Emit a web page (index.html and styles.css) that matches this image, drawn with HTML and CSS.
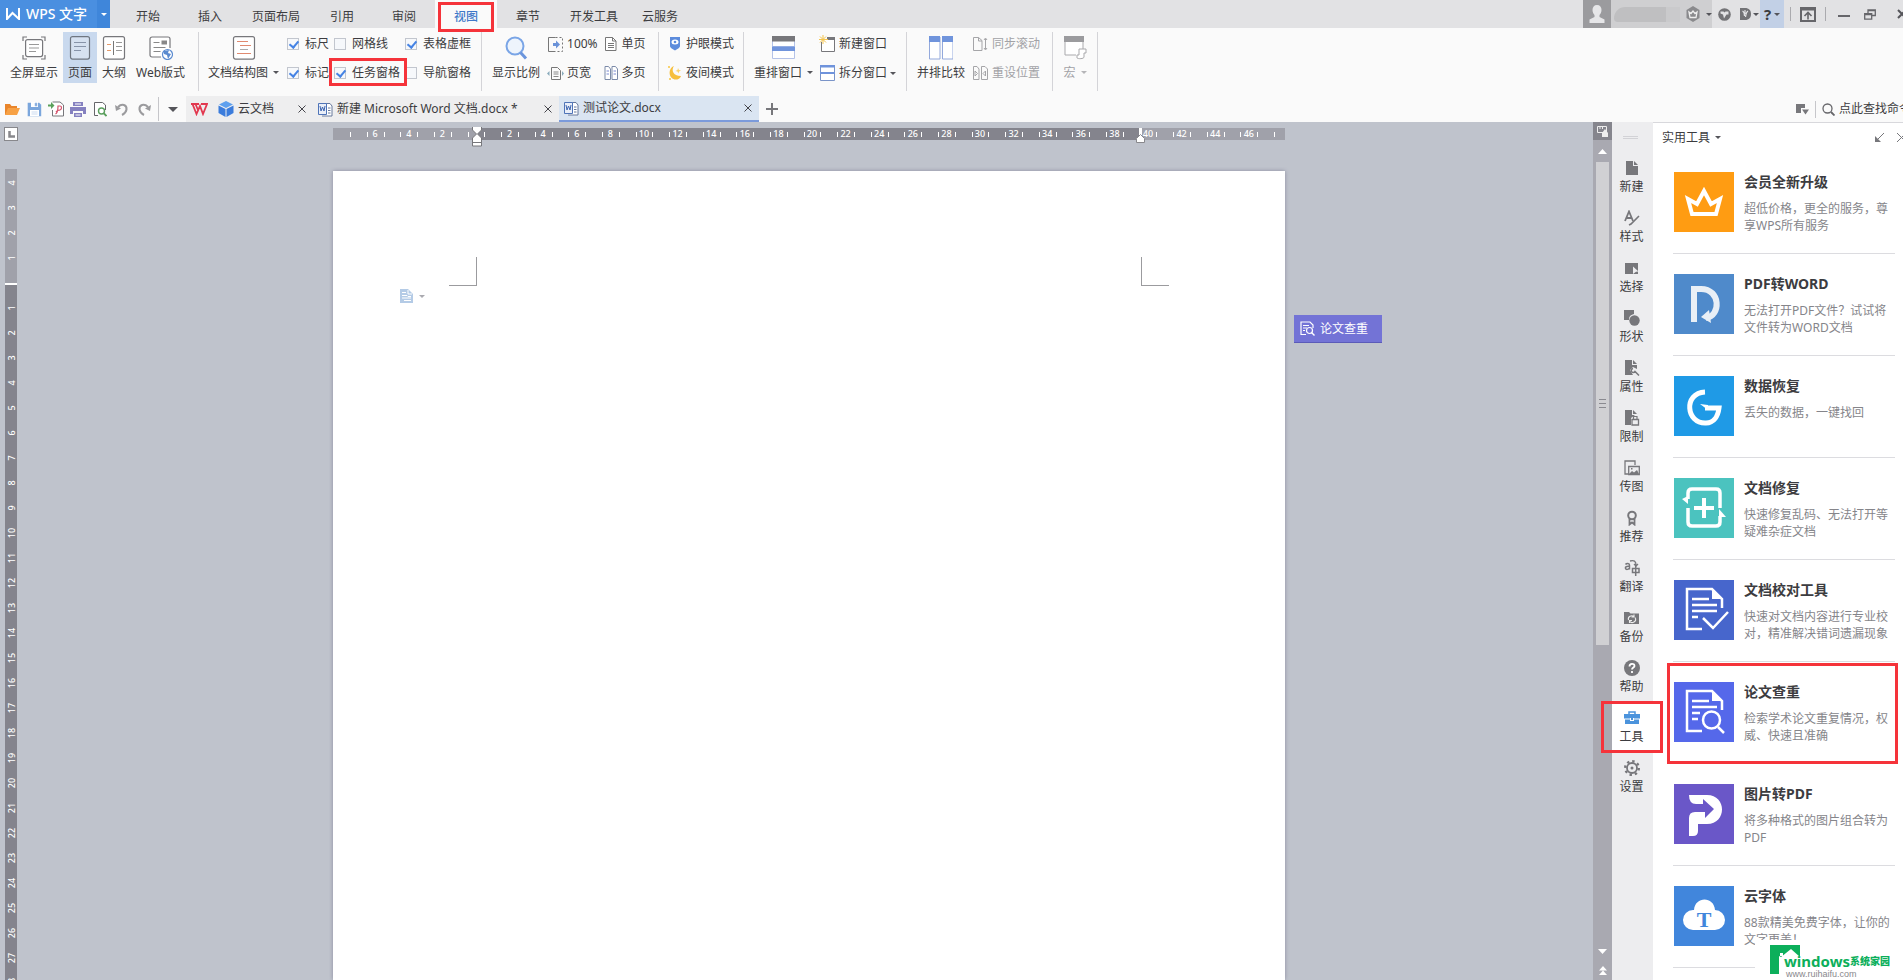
FILE: index.html
```html
<!DOCTYPE html>
<html lang="zh-CN">
<head>
<meta charset="utf-8">
<title>WPS 文字</title>
<link rel="stylesheet" href="styles.css">
</head>
<body>
<div class="app">
  <header class="titlebar">
    <button class="brand"><svg width="14" height="12" viewBox="0 0 14 12"><path d="M1 0v11l5.500-6L13 11V0" fill="none" stroke="#fff" stroke-width="2"/></svg>WPS 文字</button>
    <button class="brand-menu" aria-label="菜单"><i class="caret light"></i></button>
    <nav class="menu">
      <button>开始</button><button>插入</button><button>页面布局</button><button>引用</button><button>审阅</button><button class="active">视图</button><button>章节</button><button>开发工具</button><button>云服务</button>
    </nav>
    <div class="window-tools">
      <button class="avatar" aria-label="用户"><svg width="16" height="18" viewBox="0 0 16 18"><path d="M8 0c3 0 4.500 2 4.500 5 0 2-1 4-2 5v2l5 2.500V18H.5v-3.500l5-2.500v-2c-1-1-2-3-2-5C3.500 2 5 0 8 0z" fill="#e6e6e8"/></svg></button>
      <button class="account" aria-label="账户"><span class="masked"></span><svg width="16" height="16" viewBox="0 0 16 16"><path d="M8 0l6.500 4v8L8 16l-6.500-4V4z" fill="#8a8a8d"/><path d="M4 6l2 1.500L8 5l2 2.500L12 6l-1 5.500H5z" fill="none" stroke="#eee" stroke-width="1.300"/></svg><i class="caret"></i></button>
      <button class="tool skin" aria-label="皮肤"><svg width="13" height="13" viewBox="0 0 13 13"><circle cx="6.500" cy="6.500" r="6.300" fill="#737376"/><path d="M2.500 3.500h3l1 1 1-1h3v3H8.500L6 10.500l-1-4-2.500-1z" fill="#e2e2e4"/></svg></button>
      <button class="tool docer" aria-label="稻壳"><svg width="11" height="12" viewBox="0 0 11 12"><path d="M0 0h5c4 0 6 2.500 6 6s-2 6-6 6H0z" fill="#737376"/><path d="M2.500 3c2 1 2 3 2 5M8 3C6 4 6 6 5.500 9M5 2v4" stroke="#e2e2e4" stroke-width="1.200" fill="none"/></svg><i class="caret"></i></button>
      <button class="tool help" aria-label="帮助"><b>?</b><i class="caret"></i></button>
      <span class="bar"></span>
      <button class="tool" aria-label="折叠功能区"><svg width="16" height="15" viewBox="0 0 16 15"><path d="M1 1h14v13H1zM1 2.500h14" fill="none" stroke="#66666a" stroke-width="2"/><path d="M8 12.500V6M4.500 9L8 5.500 11.500 9" fill="none" stroke="#66666a" stroke-width="1.600"/></svg></button>
      <span class="bar"></span>
      <button class="tool win" aria-label="最小化"><svg width="12" height="10" viewBox="0 0 12 10"><path d="M0 7h12" stroke="#66666a" stroke-width="2"/></svg></button>
      <button class="tool win" aria-label="还原"><svg width="12" height="11" viewBox="0 0 12 11"><path d="M.7 4.700h7v5.500h-7zM.7 5.500h7M4 4V1h7.300v5.500H8M4 1.500h7" fill="none" stroke="#66666a" stroke-width="1.300"/></svg></button>
      <button class="tool close" aria-label="关闭"><svg width="10" height="10" viewBox="0 0 10 10"><path d="M1 1l8 8M9 1L1 9" stroke="#55555a" stroke-width="2"/></svg></button>
    </div>
  </header>

  <section class="ribbon">
    <div class="group views">
      <button class="big"><svg width="24" height="24" viewBox="0 0 24 24"><path d="M1 5V1h4M19 1h4v4M1 19v4h4M19 23h4v-4" fill="none" stroke="#77777b" stroke-width="1.200"/><rect x="3.600" y="3.600" width="17" height="17" rx="2" fill="#fff" stroke="#77777b" stroke-width="1.200"/><path d="M7 8.500h10M7 12h10M7 15.500h7" stroke="#999" /></svg><span>全屏显示</span></button>
      <button class="big selected"><svg width="24" height="24" viewBox="0 0 24 24"><rect x="2.500" y=".6" width="19" height="22.500" rx="2" fill="#d6e1f0" stroke="#6f7680" stroke-width="1.200"/><path d="M6 6.500h12M6 10.500h12M6 14.500h7" stroke="#8793a8"/></svg><span>页面</span></button>
      <button class="big"><svg width="24" height="24" viewBox="0 0 24 24"><rect x="1.500" y=".6" width="21" height="22.500" rx="2" fill="#fff" stroke="#77777b" stroke-width="1.200"/><path d="M11.500 5v14" stroke="#777"/><path d="M5 8.500h4M5 14.500h4" stroke="#e59a6a"/><path d="M14 6.500h6M14 10.500h6M14 14.500h6" stroke="#999"/></svg><span>大纲</span></button>
      <button class="big web"><svg width="24" height="24" viewBox="0 0 24 24"><path d="M12 21H3a2 2 0 0 1-2-2V3a2 2 0 0 1 2-2h16a2 2 0 0 1 2 2v9" fill="#fff" stroke="#77777b" stroke-width="1.200"/><path d="M4.500 6.500h6M4.500 11.500h12M4.500 15.500h7" stroke="#888"/><path d="M12.500 4.500H18v4h-5.500z" fill="#888"/><circle cx="18.500" cy="18.500" r="5" fill="#fff" stroke="#5b8bd0" stroke-width="1.200"/><path d="M15 15l5-1-1 3 3 1-3 5-1-4-3-1z" fill="#5b8bd0"/></svg><span>Web版式</span></button>
    </div>
    <div class="group structure">
      <button class="big"><svg width="24" height="24" viewBox="0 0 24 24"><rect x="1.500" y=".6" width="21" height="22.500" rx="2" fill="#fff" stroke="#77777b" stroke-width="1.200"/><path d="M5 5.500h11M8 9.500h11M5 17.500h14" stroke="#e08a70"/><path d="M8 13.500h8" stroke="#aaa"/></svg><span>文档结构图<i class="caret"></i></span></button>
      <div class="checks">
        <label><input type="checkbox" checked>标尺</label><label><input type="checkbox">网格线</label><label><input type="checkbox" checked>表格虚框</label>
        <label><input type="checkbox" checked>标记</label><label class="marked"><input type="checkbox" checked>任务窗格</label><label><input type="checkbox">导航窗格</label>
      </div>
    </div>
    <div class="group zoom">
      <button class="big"><svg width="24" height="24" viewBox="0 0 24 24"><circle cx="11" cy="10" r="8.500" fill="#eef4fc" stroke="#7aa5e6" stroke-width="2"/><path d="M16.500 16.500L22 22.500" stroke="#6b95dc" stroke-width="3"/></svg><span>显示比例</span></button>
      <div class="pair">
        <button><svg width="17" height="17" viewBox="0 0 17 17"><path d="M8.500 1.500H1.500v14h7" fill="none" stroke="#777"/><path d="M8.500 1.500h7v14h-7" fill="none" stroke="#777" stroke-dasharray="2 2"/><path d="M6 7h3V4.500L13 8.500 9 12.500V10H6z" fill="#6a92d8"/></svg>100%</button>
        <button><svg width="17" height="17" viewBox="0 0 17 17"><path d="M4.500 2.500h6l3 3v9h-9z" fill="none" stroke="#777"/><path d="M6.500 7h5M6.500 9h5M6.500 11.500h5" stroke="#888"/><path d="M2.500 6L0 8.500 2.500 11zM15 6v5l2-2.500z" fill="#8ab"/></svg>页宽</button>
      </div>
      <div class="pair pages">
        <button><svg width="14" height="16" viewBox="0 0 14 16"><path d="M1.500 1.500h7l3.500 3.500v9.500H1.500z" fill="#fff" stroke="#777"/><path d="M8.500 1.500V5H12M4 7.500h6M4 9.500h6M4 11.500h6" stroke="#777" fill="none"/></svg>单页</button>
        <button><svg width="14" height="16" viewBox="0 0 14 16"><path d="M1 1.500h3.500L6.500 4v10.500H1zM8 1.500h3.500l2 2.500v10.500H8z" fill="#fff" stroke="#7b8aa8"/><path d="M2.500 6h2.500M2.500 9h2.500M9.500 6h2.500M9.500 9h2.500" stroke="#7b8ad0"/></svg>多页</button>
      </div>
    </div>
    <div class="group eye">
      <div class="pair">
        <button><svg width="14" height="16" viewBox="0 0 14 16"><path d="M2 1h10v9c0 2-3 3-5 4.500C5 13 2 12 2 10z" fill="#5c8cdc"/><ellipse cx="7" cy="6" rx="3.500" ry="2.500" fill="#fff"/><circle cx="7" cy="6" r="1.300" fill="#5c8cdc"/></svg>护眼模式</button>
        <button><svg width="14" height="16" viewBox="0 0 14 16"><path d="M6 1C3 5 5 11 13 11c-1 3-4 4-6.500 3.500C0 13 0 3 6 1z" fill="#f6bf3c"/><path d="M10 3l1 2 2 .5-2 1-.5 2-1-2-2-.5 2-1zM0 1h2v2H0zM1 13h2v2H1z" fill="#f9d36e"/></svg>夜间模式</button>
      </div>
    </div>
    <div class="group windows">
      <button class="big"><svg width="24" height="24" viewBox="0 0 24 24"><path d="M.5 1h22v9.500H.5zM.5 12.500h22v10H.5z" fill="#fff" stroke="#b5c3e8"/><path d="M0 0h23v5.500H0z" fill="#77777b"/><path d="M0 10.500h23V15H0z" fill="#7094dc"/></svg><span>重排窗口<i class="caret"></i></span></button>
      <div class="pair">
        <button><svg width="17" height="18" viewBox="0 0 17 18"><path d="M2.500 7v9.500h13V3.500H8" fill="#fff" stroke="#77777b"/><path d="M8 2h8v3H8z" fill="#77777b"/><path d="M4 0v9M0 4.500h9M1 1.500l6 6M7 1.500l-6 6" stroke="#f4c54e"/></svg>新建窗口</button>
        <button><svg width="17" height="18" viewBox="0 0 17 18"><path d="M1.500 1.500h14v7h-14zM1.500 8.500h14v8h-14z" fill="#fff" stroke="#7a94c8"/><path d="M1 1h15v2.500H1zM1 8h15v2H1z" fill="#6f93dc"/></svg>拆分窗口<i class="caret"></i></button>
      </div>
    </div>
    <div class="group compare">
      <button class="big"><svg width="24" height="24" viewBox="0 0 24 24"><path d="M.5 1h10.500v22H.5zM13.500 1H24v22H13.500z" fill="#fff" stroke="#93a9dc"/><path d="M0 0h11v6H0zM13 0h11v6H13z" fill="#7094dc"/></svg><span>并排比较</span></button>
      <div class="pair off">
        <button disabled><svg width="17" height="16" viewBox="0 0 17 16"><path d="M1.500 1.500h5l3.500 3v10H1.500zM6.500 1.500V5H10M13.500 3v10M12 4l1.500-2L15 4M12 12l1.500 2 1.500-2" fill="none" stroke="#a5a5a8"/></svg>同步滚动</button>
        <button disabled><svg width="17" height="16" viewBox="0 0 17 16"><path d="M1.500 1.500h3.500L7 4v10.500H1.500zM9.500 1.500H13L15.500 4v10.500h-6zM3 6v5l2.500-2.500zM13.500 6v5L11 8.500z" fill="none" stroke="#a5a5a8"/></svg>重设位置</button>
      </div>
    </div>
    <div class="group macro">
      <button class="big" disabled><svg width="24" height="24" viewBox="0 0 24 24"><path d="M13 19H2V3h18v10" fill="#fff" stroke="#a9a9ac"/><path d="M1 0h20v6H1z" fill="#9b9b9e"/><path d="M16 13h7v4h-2v4c0 2-6 2-7 1v-3h2z" fill="#fff" stroke="#a9a9ac"/></svg><span>宏<i class="caret"></i></span></button>
    </div>
  </section>

  <section class="docbar">
    <div class="quick">
      <button aria-label="打开"><svg width="16" height="14" viewBox="0 0 16 14"><path d="M1 13V2h5l1.500 2H13v2" fill="#e9852b"/><path d="M1 13L4 6h12l-3 7z" fill="#f7a145"/></svg></button>
      <button aria-label="保存"><svg width="15" height="15" viewBox="0 0 15 15"><path d="M.7.7h11.500l2 2v11.500H.7z" fill="#7ba6dc"/><path d="M4 0h7v5H4zM3 8h9v6H3z" fill="#fff"/><path d="M8 1h2v3H8zM4.500 10h6M4.500 12h6" fill="#7ba6dc" stroke="#a9c4e6" stroke-width=".6"/></svg></button>
      <button aria-label="输出为PDF"><svg width="16" height="16" viewBox="0 0 16 16"><path d="M4.500 9v6h11V4L12 1H4.500" fill="#fff" stroke="#77777b"/><path d="M0 3.500h3V1l3.500 3.500L3 8V5.500H0z" fill="#5aa05a"/><path d="M7.500 13c2-1 2.500-5 2.500-8h2c2 0 2 3.500 0 4-2 .5-3 0-4 2" fill="none" stroke="#d4506a" stroke-width="1.200"/></svg></button>
      <button aria-label="打印"><svg width="16" height="15" viewBox="0 0 16 15"><path d="M3 0h10v4H3zM0 5h16v7h-3V9H3v3H0zM4 11h8v4H4z" fill="#8581c0"/><path d="M5 2h6M5.500 13h5" stroke="#fff"/></svg></button>
      <button aria-label="打印预览"><svg width="14" height="16" viewBox="0 0 14 16"><path d="M5 14.500H1.500v-13h8L12.500 4v5" fill="#fff" stroke="#66666a"/><circle cx="8.500" cy="10" r="3" fill="#fff" stroke="#5b9f5e" stroke-width="1.400"/><path d="M10.500 12l3 3" stroke="#5b9f5e" stroke-width="1.800"/></svg></button>
      <button aria-label="撤销"><svg width="14" height="14" viewBox="0 0 14 14"><path d="M3 5c4-4 9-2 8.500 2.500C11 10 9 12 7 13" fill="none" stroke="#9b9b9e" stroke-width="2"/><path d="M0 3l1 6 5-2.500z" fill="#9b9b9e"/></svg></button>
      <button aria-label="恢复"><svg width="14" height="14" viewBox="0 0 14 14"><path d="M11 5C7 1 2 3 2.500 7.500 3 10 5 12 7 13" fill="none" stroke="#9b9b9e" stroke-width="2"/><path d="M14 3l-1 6-5-2.500z" fill="#9b9b9e"/></svg></button>
      <span class="bar"></span>
      <button aria-label="更多"><i class="caret wide"></i></button>
    </div>
    <div class="tabs">
      <button class="home" aria-label="首页"><svg width="17" height="13" viewBox="0 0 17 13"><path d="M0 1h8M1.500 1l4 10L9 3l3 8 4-10h-6M4.500 1L7 7" fill="none" stroke="#e2384f" stroke-width="1.800"/></svg></button>
      <div class="tab cloud"><svg width="16" height="16" viewBox="0 0 16 16"><path d="M8 0l7 3.500L8 7 1 3.500z" fill="#5fa0ee"/><path d="M.5 4.500L7.500 8v8L.5 12zM15.500 4.500L8.500 8v8l7-4z" fill="#3b7cdc"/></svg><span>云文档</span><button class="x" aria-label="关闭"><svg width="8" height="8"><path d="M.5.5l7 7M7.500.5l-7 7" stroke="#44444a"/></svg></button></div>
      <div class="tab file"><svg width="15" height="15" viewBox="0 0 15 15"><path d="M5 1.500h7L14 4v10H4" fill="#fff" stroke="#66789c"/><path d="M10 6h2.500M10 8.500h2.500M10 11h2.500" stroke="#66789c"/><path d="M.5 1.500h8v11h-8z" fill="#e9eef8" stroke="#4f74b8"/><path d="M2 4l1 5 1.500-4L6 9l1-5" fill="none" stroke="#3f66b0"/></svg><span>新建 Microsoft Word 文档.docx *</span><button class="x" aria-label="关闭"><svg width="8" height="8"><path d="M.5.5l7 7M7.500.5l-7 7" stroke="#44444a"/></svg></button></div>
      <div class="tab file active"><svg width="15" height="15" viewBox="0 0 15 15"><path d="M5 1.500h7L14 4v10H4" fill="#fff" stroke="#66789c"/><path d="M10 6h2.500M10 8.500h2.500M10 11h2.500" stroke="#66789c"/><path d="M.5 1.500h8v11h-8z" fill="#e9eef8" stroke="#4f74b8"/><path d="M2 4l1 5 1.500-4L6 9l1-5" fill="none" stroke="#3f66b0"/></svg><span>测试论文.docx</span><button class="x" aria-label="关闭"><svg width="8" height="8"><path d="M.5.5l7 7M7.500.5l-7 7" stroke="#44444a"/></svg></button></div>
    </div>
    <button class="add" aria-label="新建标签"><svg width="12" height="12" viewBox="0 0 12 12"><path d="M6 0v12M0 6h12" stroke="#77777b" stroke-width="2"/></svg></button>
    <div class="finder">
      <button aria-label="窗口列表"><svg width="13" height="11" viewBox="0 0 13 11"><path d="M0 0h9v4H5v5H0z" fill="#77777b"/><path d="M6 5.500h7L9.500 10.500z" fill="#77777b"/></svg></button>
      <span class="bar"></span>
      <label for="find"><svg width="13" height="13" viewBox="0 0 13 13"><circle cx="5.500" cy="5.500" r="4.500" fill="none" stroke="#66666a" stroke-width="1.300"/><path d="M9 9l3.500 3.500" stroke="#66666a" stroke-width="1.800"/></svg></label>
      <input id="find" type="text" aria-label="查找命令" value="点此查找命令">
    </div>
  </section>

  <main class="workspace">
    <section class="editor">
      <div class="ruler-row">
        <button class="tabstop" aria-label="制表符"><svg width="7" height="7" viewBox="0 0 7 7"><path d="M1.500 0v5.500H7" fill="none" stroke="#88888c" stroke-width="2.500"/></svg></button>
        <div class="ruler-area"><svg class="h-ruler" id="hruler" width="952" height="28"></svg></div>
      </div>
      <div class="canvas-row">
        <svg class="v-ruler" id="vruler" width="12" height="100%"></svg>
        <div class="canvas">
          <article class="page">
            <div class="margins"><span class="mark left"></span><span class="mark right"></span></div>
            <button class="header-tool" aria-label="页眉选项"><svg width="13" height="14" viewBox="0 0 13 14"><path d="M0 0h8l5 5v9H0z" fill="#b4cbe6"/><path d="M2 3.500h4M2 6.500h5l1 1h3M2 9h9M4 11.500h7M8 1v4h4" fill="none" stroke="#fff"/></svg><i class="caret"></i></button>
            <button class="float"><svg width="15" height="15" viewBox="0 0 15 15"><path d="M6 13.500H1V1h9l3 3v3M3 4.500h6M3 7h4M3 9.500h2" fill="none" stroke="#fff" stroke-width="1.200"/><circle cx="9.500" cy="9.500" r="3" fill="none" stroke="#fff" stroke-width="1.200"/><path d="M11.500 11.500l3 3" stroke="#fff" stroke-width="1.400"/></svg>论文查重</button>
          </article>
        </div>
      </div>
    </section>

    <aside class="scrollbar">
      <button class="ruler-toggle" aria-label="标尺开关"><svg width="11" height="11" viewBox="0 0 11 11"><path d="M.5.5h9v6h-9z" fill="none" stroke="#eee"/><path d="M3 0v3M5.500 0v3" stroke="#eee"/><path d="M8 3l3 4v4H5V7z" fill="#eee"/></svg></button>
      <button class="up" aria-label="向上"><svg width="9" height="5"><path d="M0 5l4.500-5L9 5z" fill="#fff"/></svg></button>
      <div class="track"><div class="thumb"><svg width="7" height="9"><path d="M0 .5h7M0 4.500h7M0 8.500h7" stroke="#8a8a90"/></svg></div></div>
      <button class="down" aria-label="向下"><svg width="9" height="5"><path d="M0 0h9L4.500 5z" fill="#fff"/></svg></button>
      <button class="prev" aria-label="上一页"><svg width="8" height="9"><path d="M0 4.500L4 0l4 4.500zM0 9l4-4.500L8 9z" fill="#fff"/></svg></button>
    </aside>

    <nav class="strip">
      <span class="grip"></span>
      <button><svg width="16" height="16" viewBox="0 0 16 16"><path d="M2 1h7v5h5v9H2zM10 1l4 4h-4z" fill="#77777b"/></svg>新建</button>
      <button><svg width="16" height="16" viewBox="0 0 16 16"><path d="M1 11L5 1.500 9 11M2.500 8h5" fill="none" stroke="#77777b" stroke-width="1.800"/><path d="M15 6l-8 8-2 1" stroke="#77777b" stroke-width="1.600" fill="none"/></svg>样式</button>
      <button><svg width="16" height="16" viewBox="0 0 16 16"><path d="M1 3h13v11H1z" fill="#77777b"/><path d="M9 6.500l5.500 5-2.500.3L9 14z" fill="#ededef"/></svg>选择</button>
      <button><svg width="16" height="16" viewBox="0 0 16 16"><path d="M0 0h10v4C6 5 5 7 5 10H0z" fill="#77777b"/><circle cx="10.500" cy="10.500" r="5.200" fill="#77777b"/></svg>形状</button>
      <button><svg width="16" height="16" viewBox="0 0 16 16"><path d="M1 0h7v5h5v4L9 7 6 10l3 5H1zM9 0l4 4H9z" fill="#77777b"/><path d="M9 8.500a2 2 0 1 0 2 3l4 4" fill="none" stroke="#77777b" stroke-width="1.500"/></svg>属性</button>
      <button><svg width="16" height="16" viewBox="0 0 16 16"><path d="M1 0h7v5h3L7 8v7H1zM9 0l4 4H9z" fill="#77777b"/><path d="M8 9.500h6.500V15H8z" fill="none" stroke="#77777b" stroke-width="1.300"/><path d="M9.500 9V6.500h3.500V9" fill="none" stroke="#77777b" stroke-width="1.200"/></svg>限制</button>
      <button><svg width="16" height="16" viewBox="0 0 16 16"><path d="M4 14H1V1h10v4M4.700 6.500h10.600v8H4.700z" fill="none" stroke="#77777b" stroke-width="1.300"/><path d="M5 14l3-3 2 1.500 3-2.500 2 4zM7 8h1.500v1.500H7z" fill="#77777b"/></svg>传图</button>
      <button><svg width="16" height="16" viewBox="0 0 16 16"><circle cx="8" cy="5.500" r="3.800" fill="none" stroke="#77777b" stroke-width="2"/><path d="M5.500 9v5.500L8 12.500l2.500 2V9" fill="none" stroke="#77777b" stroke-width="1.800"/></svg>推荐</button>
      <button><svg width="16" height="16" viewBox="0 0 16 16"><path d="M1.500 4.500c1-1.500 4-1.500 4 .5v4.500M5.500 6.500c-3-.5-4.500.5-4 2 .5 1.500 3.500 1 4-.5M8.500 8.500h6.500v4H8.500zM11.700 6v10" fill="none" stroke="#77777b" stroke-width="1.500"/><path d="M6 1c4-1 6 0 6 4M10 4l2 2 2-2" fill="none" stroke="#77777b" stroke-width="1.300"/></svg>翻译</button>
      <button><svg width="16" height="16" viewBox="0 0 16 16"><path d="M0 2h5l1.500 1.500H15V14H0z" fill="#77777b"/><path d="M4.500 10a3.200 3.200 0 0 1 5.500-3M11 7.500a3.200 3.200 0 0 1-5.500 3.500M10 4.500V7H7.500M5.500 13v-2.500H8" fill="none" stroke="#eee" stroke-width="1.100"/></svg>备份</button>
      <button><svg width="16" height="16" viewBox="0 0 16 16"><circle cx="8" cy="8" r="8" fill="#77777b"/><path d="M5.500 6.500c0-3.500 5-3.500 5-.5 0 1.500-2.500 1.700-2.500 3.500M8 11v2" fill="none" stroke="#fff" stroke-width="1.800"/></svg>帮助</button>
      <button class="active"><svg width="16" height="16" viewBox="0 0 16 16"><path d="M5 4V2h6v2" fill="none" stroke="#4b93dc" stroke-width="1.500"/><path d="M0 4h16v4.500H0zM1 9.500h14V14H1z" fill="#4b93dc"/><path d="M6 8h4v3H6z" fill="#fff"/><path d="M7 8h2v2H7z" fill="#4b93dc"/></svg>工具</button>
      <button><svg width="16" height="16" viewBox="0 0 16 16"><circle cx="8" cy="8" r="5" fill="none" stroke="#77777b" stroke-width="1.800"/><circle cx="8" cy="8" r="1.500" fill="#77777b"/><circle cx="8" cy="8" r="6.800" fill="none" stroke="#77777b" stroke-width="2.400" stroke-dasharray="2.400 2.940"/></svg>设置</button>
    </nav>

    <aside class="panel">
      <header><button class="heading">实用工具<i class="caret"></i></button><button class="shrink" aria-label="收起"><svg width="9" height="9"><path d="M9 0L2 7" stroke="#77777b"/><path d="M0 3v6h6z" fill="#77777b"/></svg></button><button class="shut" aria-label="关闭"><svg width="9" height="9"><path d="M0 0l9 9M9 0L0 9" stroke="#77777b"/></svg></button></header>
      <ul class="cards">
        <li><svg class="orange" viewBox="0 0 60 60"><path d="M14 27l9 5 7-13 7 13 9-5-4 15H18z" fill="none" stroke="#fff" stroke-width="4"/></svg><div><h3>会员全新升级</h3><p>超低价格，更全的服务，尊享WPS所有服务</p></div></li>
        <li><svg class="steel" viewBox="0 0 60 60"><path d="M20 48V15h7c20 0 20 27 5 29" fill="none" stroke="#e9eff6" stroke-width="6"/><path d="M27 43l8-7 2 13z" fill="#e9eff6"/></svg><div><h3>PDF转WORD</h3><p>无法打开PDF文件？试试将文件转为WORD文档</p></div></li>
        <li><svg class="sky" viewBox="0 0 60 60"><path d="M31 16c-22 1-19 32 1 31 8 0 12-7 13-15H31" fill="none" stroke="#fff" stroke-width="5"/><path d="M26 28l8 1v5z" fill="#fff"/></svg><div><h3>数据恢复</h3><p>丢失的数据，一键找回</p></div></li>
        <li><svg class="teal" viewBox="0 0 60 60"><path d="M14 21v-6q0-4 4-4h24q4 0 4 4v15M46 38v6q0 4-4 4H18q-4 0-4-4V30" fill="none" stroke="#fff" stroke-width="3.500"/><path d="M8 21l6-3v8zM45 31l7 8h-7zM28 20h4v8h8v4h-8v8h-4v-8h-8v-4h8z" fill="#fff"/></svg><div><h3>文档修复</h3><p>快速修复乱码、无法打开等疑难杂症文档</p></div></li>
        <li><svg class="royal" viewBox="0 0 60 60"><path d="M28 49H13V9h25l10 10v9" fill="none" stroke="#fff" stroke-width="2.500"/><path d="M38 9v10h11z" fill="#fff"/><path d="M18 19h17M18 25h25M18 31h25M18 37h6M29 38l10 10 15-16" fill="none" stroke="#fff" stroke-width="2.500"/></svg><div><h3>文档校对工具</h3><p>快速对文档内容进行专业校对，精准解决错词遗漏现象</p></div></li>
        <li class="marked"><svg class="indigo" viewBox="0 0 60 60"><path d="M28 49H13V9h25l10 10v9" fill="none" stroke="#fff" stroke-width="2.500"/><path d="M38 9v10h11z" fill="#fff"/><path d="M18 19h17M18 25h25M18 31h8M18 37h6M44 45l6 6" fill="none" stroke="#fff" stroke-width="2.500"/><circle cx="37.500" cy="38" r="8.500" fill="none" stroke="#fff" stroke-width="2.500"/></svg><div><h3>论文查重</h3><p>检索学术论文重复情况，权威、快速且准确</p></div></li>
        <li><svg class="violet" viewBox="0 0 60 60"><path d="M15 11h18c20 0 20 29 0 29h-9v7q0 5-5 5h-4V34q0-6 6-6h10v6l9-9-11-10v5h-7q-7 0-7-9z" fill="#fff"/></svg><div><h3>图片转PDF</h3><p>将多种格式的图片组合转为PDF</p></div></li>
        <li><svg class="azure" viewBox="0 0 60 60"><path d="M19 44a10 10 0 0 1 0-20h1c1-14 20-14 21 0a10 10 0 0 1 0 20z" fill="#fff"/><text x="30" y="41" text-anchor="middle" class="glyph">T</text></svg><div><h3>云字体</h3><p>88款精美免费字体，让你的文字更美！</p></div></li>
      </ul>
      <div class="stamp">
        <svg width="31" height="29" viewBox="0 0 31 29"><path d="M0 0h30v12L21 4l-10 8-2-1v18H0z" fill="#0caf5b"/><path d="M10 8h3v3h-3z" fill="#fff"/></svg>
        <div class="stamp-text">
          <span class="stamp-name">windows<small>系统家园</small></span>
          <span class="stamp-url">www.ruihaifu.com</span>
        </div>
      </div>
    </aside>
  </main>
</div>
<script src="rulers.js"></script>
</body>
</html>
```
FILE: styles.css
```css
* { box-sizing: border-box; }
body { margin: 0; font: 12px/16px "Noto Sans", "Noto Sans CJK SC", sans-serif; color: #3c3c40; overflow: hidden; }
button { font: inherit; color: inherit; background: none; border: 0; padding: 0; display: flex; align-items: center; white-space: nowrap; }
svg { display: block; flex: none; }
.app { height: 100vh; display: flex; flex-direction: column; overflow: hidden; background: #fafafa; }
.caret { display: inline-block; flex: none; border: 3px solid transparent; border-top-color: #55555a; border-bottom: 0; }
.caret.light { border-top-color: #fff; }
.caret.wide { border-width: 5px; border-bottom: 0; }
.bar { width: 1px; background: #c6c6ca; }

.titlebar { height: 28px; flex: none; display: flex; background: #e2e2e4; }
.brand { width: 97px; padding-left: 6px; gap: 6px; background: #4a8fe0; color: #fff; font-size: 14px; font-weight: 500; }
.brand-menu { width: 13px; background: #3f86da; justify-content: center; }
.menu { display: flex; margin-left: 7px; }
.menu button { min-width: 62px; padding: 6px 11px 0; justify-content: center; }
.menu .active { position: relative; background: #fafafa; color: #3f78c8; font-weight: 500; }
.menu .active::after { content: ""; position: absolute; inset: 2px 3px -4px; border: 3px solid #f5333a; }
.window-tools { margin-left: auto; display: flex; align-items: stretch; width: 320px; flex: none; overflow: hidden; }
.window-tools > * { flex: none; }
.avatar { width: 28px; background: #9b9b9e; justify-content: center; }
.account { width: 101px; background: #cfcfd1; padding-left: 3px; gap: 5px; }
.masked { width: 66px; height: 15px; border-radius: 12px 0 0 4px; background: linear-gradient(90deg, #bfbfc1 0 52px, #cacacc 52px); }
.tool { padding: 0 3px; gap: 2px; }
.skin { padding: 0 4px 0 6px; }
.docer { padding: 0 1px 0 5px; }
.help { width: 24px; padding: 0 4px; gap: 3px; background: #c2d0e6; }
.help b { font-size: 15px; }
.window-tools .bar { height: 14px; margin: 7px 6px 0; background: #aaaaae; }
.win { width: 26px; padding: 0 6px; }
.close { padding-left: 13px; }

.ribbon { flex: none; height: 68px; display: flex; padding-top: 4px; }
.group { height: 59px; display: flex; border-right: 1px solid #d4d4d8; }
.big { flex-direction: column; height: 51px; padding: 4px 5px 0; gap: 5px; align-self: flex-start; }
.big.selected { background: #c9d9ee; }
.big .caret { margin-left: 5px; vertical-align: 3px; }
button:disabled { color: #a2a2a6; }
button:disabled .caret { border-top-color: #b5b5b8; }
.views { padding-left: 5px; width: 199px; }
.structure { width: 283px; padding-left: 4px; }
.checks { display: grid; grid-template-columns: 47px 71px 70px; grid-template-rows: 24px 34px; margin-left: 3px; }
.checks label { display: flex; align-items: center; gap: 6px; white-space: nowrap; }
.checks input { appearance: none; position: relative; width: 12px; height: 12px; margin: 0; border: 1px solid #c2c6ce; background: #f6f8fb; flex: none; }
.checks input:checked::after { content: ""; position: absolute; left: 3px; top: 0; width: 4px; height: 7px; border: solid #4583e4; border-width: 0 2px 2px 0; transform: rotate(40deg); }
.checks .marked { position: relative; z-index: 1; }
.checks .marked::after { content: ""; position: absolute; inset: 2px -2px 4px -5px; border: 3px solid #f5333a; }
.pair { display: grid; grid-template-rows: 24px 34px; justify-items: start; }
.pair button { gap: 3px; }
.zoom { width: 177px; padding-left: 5px; }
.zoom .pair { width: 60px; margin-left: 2px; }
.zoom .pages { margin-left: 2px; }
.zoom .pages button { gap: 4px; }
.eye { width: 85px; padding-left: 9px; }
.eye .pair button { gap: 4px; }
.windows { width: 163px; padding-left: 5px; }
.windows .pair { margin-left: 1px; }
.compare { width: 146px; padding-left: 5px; }
.compare .pair { margin-left: 2px; }
.macro { width: 45px; padding-left: 5px; }

.docbar { flex: none; height: 26px; display: flex; }
.quick { width: 186px; padding-left: 1px; display: flex; flex: none; }
.quick button { width: 22px; justify-content: center; }
.quick .bar { height: 24px; margin: 1px 3px; }
.tabs { display: flex; background: #eeeeef; }
.home { width: 27px; justify-content: center; }
.tab { display: flex; align-items: center; gap: 4px; padding: 0 5px; white-space: nowrap; }
.tab .x { margin-left: auto; width: 12px; height: 16px; justify-content: center; }
.cloud { width: 100px; }
.file { width: 246px; }
.file.active { width: 200px; background: #dae5f2; border-bottom: 2px solid #7b9adb; }
.add { padding: 0 7px; }
.finder { margin-left: auto; width: 107px; display: flex; align-items: center; flex: none; overflow: hidden; }
.finder .bar { height: 17px; margin: 0 6px; }
.finder input { font: inherit; color: inherit; border: 0; padding: 0; margin-left: 4px; min-width: 0; flex: 1; background: none; }

.workspace { flex: 1; min-height: 0; display: flex; }
.editor { flex: 1; min-width: 0; display: flex; flex-direction: column; background: #bfc3cc; }
.ruler-row { flex: none; height: 47px; display: flex; padding-top: 5px; }
.tabstop { width: 14px; height: 14px; margin: 0 7px 0 4px; justify-content: center; background: #fff; border: 1px solid #88888c; flex: none; }
.ruler-area { flex: 1; display: flex; justify-content: center; }
.canvas-row { flex: 1; min-height: 0; display: flex; padding-left: 5px; }
.v-ruler { overflow: hidden; }
.ruler-text { font: 500 9px "Noto Sans", sans-serif; fill: #fff; text-anchor: middle; }
.canvas { flex: 1; margin-left: 8px; padding-top: 2px; display: flex; justify-content: center; }
.page { position: relative; width: 952px; background: #fff; padding-top: 86px; box-shadow: 0 0 4px #8c8ca0; clip-path: inset(-4px -120px 0 -4px); }
.margins { display: flex; justify-content: space-between; padding: 0 116px; }
.mark { width: 28px; height: 29px; border-bottom: 1px solid #9b9b9e; }
.mark.left { border-right: 1px solid #9b9b9e; }
.mark.right { border-left: 1px solid #9b9b9e; }
.header-tool { margin: 3px 0 0 67px; gap: 6px; }
.header-tool .caret { border-top-color: #aaaab0; }
.float { position: absolute; left: calc(100% + 9px); top: 144px; width: 88px; height: 28px; padding-left: 6px; gap: 5px; color: #fff; background: #7373d6; border-bottom: 1px solid #5b5bb8; }

.scrollbar { width: 19px; flex: none; display: flex; flex-direction: column; align-items: center; background: #a9a9b1; }
.scrollbar button { justify-content: center; width: 100%; flex: none; }
.ruler-toggle { height: 18px; background: #85858d; }
.up { height: 22px; }
.track { flex: 1; width: 13px; }
.thumb { height: 62%; background: #d0d0d3; display: flex; align-items: center; justify-content: center; }
.down { height: 20px; }
.prev { height: 19px; }

.strip { width: 41px; flex: none; display: flex; flex-direction: column; background: #ededef; }
.grip { width: 15px; height: 3px; margin: 14px 0 13px 11px; border: solid #d2d2d6; border-width: 1px 0; flex: none; }
.strip button { flex: none; height: 50px; flex-direction: column; padding: 8px 2px 0 0; gap: 3px; }
.strip .active { position: relative; background: #fff; }
.strip .active::after { content: ""; position: absolute; inset: -1px -10px -1px -11px; border: 3px solid #f5333a; z-index: 1; }

.panel { position: relative; width: 250px; flex: none; background: #fff; overflow: hidden; border-top: 1px solid #d8d8dc; }
.panel header { display: flex; height: 29px; padding-left: 9px; }
.heading { gap: 5px; }
.shrink { margin-left: auto; margin-right: 13px; }
.shut { width: 6px; overflow: hidden; justify-content: flex-start; }
.cards { list-style: none; margin: 0; padding: 0 8px 0 20px; }
.cards li { position: relative; height: 102px; display: flex; gap: 10px; padding: 20px 0 0 1px; border-bottom: 1px solid #dcdce0; }
.cards svg { width: 60px; height: 60px; }
.cards h3 { margin: 0 0 8px; font-size: 14px; line-height: 20px; font-weight: 700; }
.cards p { margin: 0; width: 146px; line-height: 17px; color: #85858a; }
.cards .marked { border-color: transparent; }
.cards .marked::after { content: ""; position: absolute; inset: 1px -3px -1px -6px; border: 3px solid #f5333a; }
.orange { background: #ff9c12; }
.steel { background: #4f8acb; }
.sky { background: #1f9ae6; }
.teal { background: #4bc3bf; }
.royal { background: #4766cc; }
.indigo { background: #5568ea; }
.violet { background: #6a57c8; }
.azure { background: #4186dc; }
.glyph { font: 700 22px "Liberation Serif", serif; fill: #4186dc; }
.stamp { position: absolute; right: 0; bottom: 0; width: 148px; height: 40px; padding: 5px 0 0 15px; display: flex; background: #fff; }
.stamp-text { display: flex; flex-direction: column; margin: 8px 0 0 -17px; }
.stamp-name { display: flex; font-size: 15px; line-height: 16px; height: 16px; font-weight: 700; color: #0caf5b; white-space: nowrap; }
.stamp-name small { font-size: 10px; line-height: 16px; font-weight: 900; }
.stamp-url { margin-left: 2px; font: 9px/10px "Liberation Sans", sans-serif; color: #88888c; }
```
FILE: rulers.js
```javascript
const NS = 'http://www.w3.org/2000/svg';
function add(svg, tag, attrs, text) {
  const el = document.createElementNS(NS, tag);
  for (const key in attrs) el.setAttribute(key, attrs[key]);
  if (text !== undefined) el.textContent = text;
  svg.appendChild(el);
}

const h = document.getElementById('hruler');
const zero = 143, unit = 16.8;
add(h, 'rect', { x: 0, y: 1, width: 952, height: 12, fill: '#a0a1aa' });
add(h, 'rect', { x: zero, y: 1, width: 665, height: 12, fill: '#84848d' });
for (let n = -8; n <= 48; n += 2) {
  const x = zero + n * unit;
  for (const t of [x - unit / 2, x + unit / 2]) {
    if (t > 2 && t < 945) add(h, 'rect', { x: Math.round(t), y: 5, width: 1, height: 5, fill: '#fff' });
  }
  if (n !== 0 && n > -8 && n < 48) add(h, 'text', { x: x, y: 10, class: 'ruler-text' }, Math.abs(n));
}
add(h, 'path', { d: 'M139.500 -1h9v4l-4 4 4 4v8h-9v-8l4-4-4-4z', fill: '#fff', stroke: '#77777b' });
add(h, 'path', { d: 'M139.500 15.500h9', stroke: '#77777b' });
add(h, 'path', { d: 'M807.500 1v7', stroke: '#fff', 'stroke-width': 3 });
add(h, 'path', { d: 'M803.500 15.500v-4l4-4 4 4v4z', fill: '#fff', stroke: '#88888c' });

const v = document.getElementById('vruler');
const origin = 115;
add(v, 'rect', { x: 0, y: 0, width: 12, height: origin, fill: '#a0a1aa' });
add(v, 'rect', { x: 0, y: origin, width: 12, height: '100%', fill: '#84848d' });
add(v, 'rect', { x: 0, y: origin - 1, width: 12, height: 2, fill: '#fff' });
const visible = Math.ceil((v.getBoundingClientRect().height - origin) / 25);
for (let n = -4; n <= visible; n++) {
  if (n === 0) continue;
  const y = origin + n * 25 - 1;
  add(v, 'text', { x: 0, y: 0, class: 'ruler-text', transform: `translate(10 ${y}) rotate(-90)` }, Math.abs(n));
}
```
